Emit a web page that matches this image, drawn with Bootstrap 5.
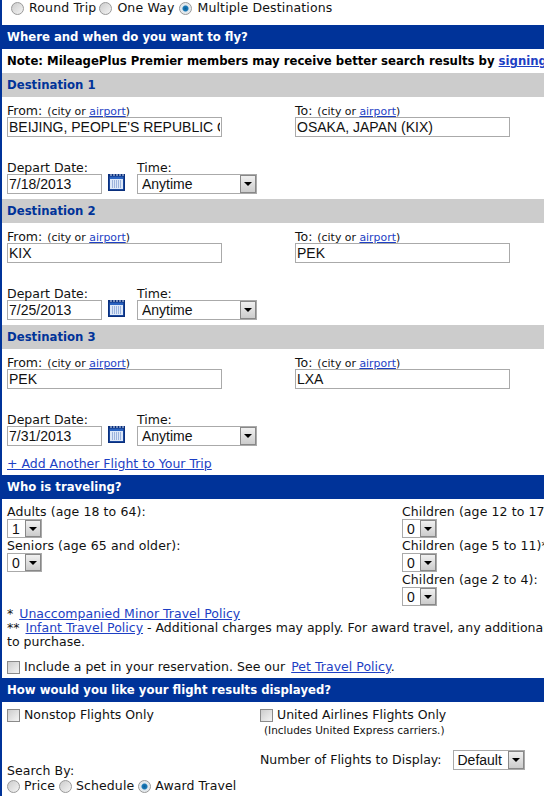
<!DOCTYPE html>
<html lang="en"><head><meta charset="utf-8"><title>Flight search</title>
<link href="https://cdn.jsdelivr.net/npm/bootstrap@5.3.0/dist/css/bootstrap.min.css" rel="stylesheet">
<style>
html,body{overflow:hidden;height:796px;background:#fff}
body{font-family:"DejaVu Sans",Verdana,sans-serif;font-size:12.5px;line-height:14px;color:#111;width:544px}
.page{border-left:2px solid #003399;width:544px;height:796px}
a{color:#1d3fc4;text-decoration:underline}
.trip{height:25px;padding-left:9px;padding-top:1px;letter-spacing:.15px}
.opt{display:inline-flex;align-items:center;gap:5px;margin-right:3px;height:14px}
.opt.wide{margin-right:5px}
.bar{height:24px;line-height:25px;background:#003399;color:#fff;font-weight:700;font-size:11.7px;padding-left:5px;white-space:nowrap}
.note{height:24px;line-height:25px;font-weight:700;font-size:11.7px;padding-left:5px;color:#000;white-space:nowrap;overflow:hidden}
.dest{height:24px;line-height:25px;background:#ccc;color:#003399;font-weight:700;font-size:11.7px;padding-left:5px}
.destbody{height:102px;padding:7px 0 0 5px}
.rowa{height:57px}
.cola{width:288px}
.tiny{font-size:10.9px;margin-left:1px}
.lab{height:13px;display:block;line-height:13px;white-space:nowrap}
.txt{display:block;height:20px;border:1px solid #aaa;padding:0 1px;font:14px/18px "Liberation Sans",Arial,sans-serif;color:#111;width:215px;outline:0;background:#fff;border-radius:0}
.txt.dt{width:95px}
.selw{display:inline-flex;height:20px;border:1px solid #aaa;background:#fff;align-items:stretch;vertical-align:top}
.selw select{appearance:none;-webkit-appearance:none;border:0;background:#fff;font:14px/18px "Liberation Sans",Arial,sans-serif;color:#111;padding:0 0 0 4px;outline:0;border-radius:0}
.arrow{width:16px;margin:0;background:linear-gradient(#f0f0f0,#ccc);border:1px solid #888;display:flex;align-items:center;justify-content:center}
.arrow i{display:block;width:0;height:0;border:4px solid transparent;border-top:4px solid #000;border-bottom:0}
.tm select{width:102px}
.num{height:19px}
.num select{width:17px;padding-left:4px}
.calw{padding-top:13px}
.calic{display:block;margin:0 12px 0 6px}
input.r,input.c{appearance:none;-webkit-appearance:none;margin:0;flex:none;display:block;width:13px;height:13px;border:1px solid #999;background:linear-gradient(135deg,#ccc,#f4f4f4)}
input.r{border-radius:50%}
input.r:checked{background:radial-gradient(circle,#0a5f9a 0,#1a7ab8 2.5px,#dfe7ec 3.5px,#eee 100%)}
input.c{border-color:#8a8a8a}
.addl{height:24px;padding:6px 0 0 5px;white-space:nowrap}
.who{height:104px;padding:6px 0 0 5px}
.adc{width:395px;flex:none}
.wl{height:14px;line-height:14px;white-space:nowrap;letter-spacing:.1px}
.selw+.wl{margin-top:1px}
.policy{padding-left:5px;height:75px;padding-top:4px;white-space:nowrap;overflow:hidden}
.pol{height:14px;line-height:14px}
.pol a{margin-left:2px}
.pet{display:flex;align-items:center;gap:4px;margin-top:11px;letter-spacing:.03px}
.pet a{margin-left:2px}
.res{padding:6px 0 0 5px;height:94px}
.col1{width:253px}
.rlab{display:flex;align-items:center;gap:4px;height:14px;white-space:nowrap}
.inc{font-size:10.5px;padding-left:4px;margin-top:2px;line-height:13px;white-space:nowrap}
.nf{margin-top:13px;gap:11px;align-items:center;white-space:nowrap}
.nf select{width:54px}
.sb{margin-top:42px}
.srow{height:14px;margin-top:1px;letter-spacing:.1px}
.srow .opt{gap:4px;margin-right:4px}
</style></head><body>
<div class="page overflow-hidden">
<div class="trip d-flex align-items-start">
 <label class="opt"><input class="r" type="radio" name="t">Round Trip</label>
 <label class="opt wide"><input class="r" type="radio" name="t">One Way</label>
 <label class="opt"><input class="r" type="radio" name="t" checked>Multiple Destinations</label>
</div>
<div class="bar">Where and when do you want to fly?</div>
<div class="note">Note: MileagePlus Premier members may receive better search results by <a href="#">signing in</a></div>

<div class="dest">Destination 1</div>
<div class="destbody">
 <div class="d-flex rowa">
  <div class="cola"><span class="lab">From: <span class="tiny">(city or <a href="#">airport</a>)</span></span><input class="txt" value="BEIJING, PEOPLE'S REPUBLIC OF CHINA"></div>
  <div><span class="lab">To: <span class="tiny">(city or <a href="#">airport</a>)</span></span><input class="txt" value="OSAKA, JAPAN (KIX)"></div>
 </div>
 <div class="d-flex">
  <div><span class="lab">Depart Date:</span><input class="txt dt" value="7/18/2013"></div>
  <div class="calw"><svg class="calic" width="17" height="17" viewBox="0 0 17 17"><rect width="17" height="17" fill="#0a2f7c"/><rect x="1.5" y="2.5" width="14" height="13" fill="#2a63c0"/><rect x="2" y="5" width="13" height="10" fill="#dde8f8"/><path d="M3 0v2M6 0v2M9 0v2M12 0v2M15 0v2" stroke="#dde8f8"/><path d="M4 7h10M4 9h10M4 11h10M4 13h10" stroke="#5a7fc0" stroke-dasharray="1 1"/></svg></div>
  <div><span class="lab">Time:</span><div class="selw tm"><select><option>Anytime</option></select><span class="arrow"><i></i></span></div></div>
 </div>
</div>

<div class="dest">Destination 2</div>
<div class="destbody">
 <div class="d-flex rowa">
  <div class="cola"><span class="lab">From: <span class="tiny">(city or <a href="#">airport</a>)</span></span><input class="txt" value="KIX"></div>
  <div><span class="lab">To: <span class="tiny">(city or <a href="#">airport</a>)</span></span><input class="txt" value="PEK"></div>
 </div>
 <div class="d-flex">
  <div><span class="lab">Depart Date:</span><input class="txt dt" value="7/25/2013"></div>
  <div class="calw"><svg class="calic" width="17" height="17" viewBox="0 0 17 17"><rect width="17" height="17" fill="#0a2f7c"/><rect x="1.5" y="2.5" width="14" height="13" fill="#2a63c0"/><rect x="2" y="5" width="13" height="10" fill="#dde8f8"/><path d="M3 0v2M6 0v2M9 0v2M12 0v2M15 0v2" stroke="#dde8f8"/><path d="M4 7h10M4 9h10M4 11h10M4 13h10" stroke="#5a7fc0" stroke-dasharray="1 1"/></svg></div>
  <div><span class="lab">Time:</span><div class="selw tm"><select><option>Anytime</option></select><span class="arrow"><i></i></span></div></div>
 </div>
</div>

<div class="dest">Destination 3</div>
<div class="destbody">
 <div class="d-flex rowa">
  <div class="cola"><span class="lab">From: <span class="tiny">(city or <a href="#">airport</a>)</span></span><input class="txt" value="PEK"></div>
  <div><span class="lab">To: <span class="tiny">(city or <a href="#">airport</a>)</span></span><input class="txt" value="LXA"></div>
 </div>
 <div class="d-flex">
  <div><span class="lab">Depart Date:</span><input class="txt dt" value="7/31/2013"></div>
  <div class="calw"><svg class="calic" width="17" height="17" viewBox="0 0 17 17"><rect width="17" height="17" fill="#0a2f7c"/><rect x="1.5" y="2.5" width="14" height="13" fill="#2a63c0"/><rect x="2" y="5" width="13" height="10" fill="#dde8f8"/><path d="M3 0v2M6 0v2M9 0v2M12 0v2M15 0v2" stroke="#dde8f8"/><path d="M4 7h10M4 9h10M4 11h10M4 13h10" stroke="#5a7fc0" stroke-dasharray="1 1"/></svg></div>
  <div><span class="lab">Time:</span><div class="selw tm"><select><option>Anytime</option></select><span class="arrow"><i></i></span></div></div>
 </div>
</div>
<div class="addl"><a href="#">+ Add Another Flight to Your Trip</a></div>

<div class="bar">Who is traveling?</div>
<div class="who d-flex">
 <div class="adc">
  <div class="wl">Adults (age 18 to 64):</div><div class="selw num"><select><option>1</option></select><span class="arrow"><i></i></span></div>
  <div class="wl">Seniors (age 65 and older):</div><div class="selw num"><select><option>0</option></select><span class="arrow"><i></i></span></div>
 </div>
 <div>
  <div class="wl">Children (age 12 to 17):</div><div class="selw num"><select><option>0</option></select><span class="arrow"><i></i></span></div>
  <div class="wl">Children (age 5 to 11)**:</div><div class="selw num"><select><option>0</option></select><span class="arrow"><i></i></span></div>
  <div class="wl">Children (age 2 to 4):</div><div class="selw num"><select><option>0</option></select><span class="arrow"><i></i></span></div>
 </div>
</div>
<div class="policy">
 <div class="pol">* <a href="#">Unaccompanied Minor Travel Policy</a></div>
 <div class="pol">** <a href="#">Infant Travel Policy</a> - Additional charges may apply. For award travel, any additional miles</div>
 <div class="pol">to purchase.</div>
 <label class="pet"><input class="c" type="checkbox"><span>Include a pet in your reservation. See our <a href="#">Pet Travel Policy</a>.</span></label>
</div>
<div class="bar">How would you like your flight results displayed?</div>
<div class="res d-flex">
 <div class="col1">
  <label class="rlab"><input class="c" type="checkbox">Nonstop Flights Only</label>
  <div class="sb"><div class="wl">Search By:</div>
   <div class="srow d-flex align-items-center">
    <label class="opt"><input class="r" type="radio" name="s">Price</label>
    <label class="opt"><input class="r" type="radio" name="s">Schedule</label>
    <label class="opt"><input class="r" type="radio" name="s" checked>Award Travel</label>
   </div>
  </div>
 </div>
 <div>
  <label class="rlab"><input class="c" type="checkbox">United Airlines Flights Only</label>
  <div class="inc">(Includes United Express carriers.)</div>
  <div class="d-flex nf"><span>Number of Flights to Display:</span><div class="selw"><select><option>Default</option></select><span class="arrow"><i></i></span></div></div>
 </div>
</div>
</div>
<script src="https://cdn.jsdelivr.net/npm/bootstrap@5.3.0/dist/js/bootstrap.bundle.min.js"></script>
</body></html>
